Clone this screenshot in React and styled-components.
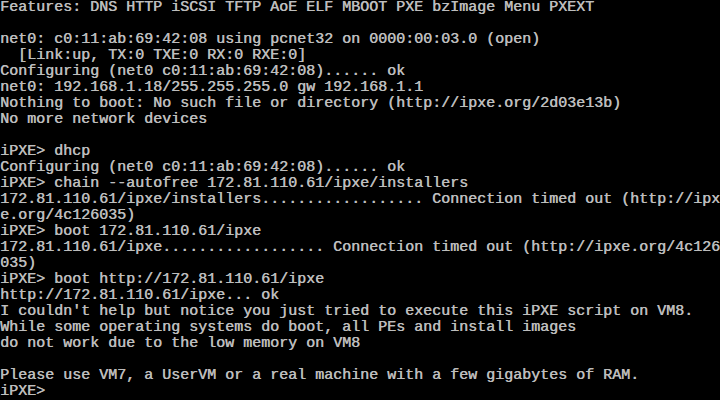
import React from "react";
import styled, { createGlobalStyle } from "styled-components";

const GlobalStyle = createGlobalStyle`
  html, body {
    margin: 0;
    padding: 0;
    background: #000;
  }
`;

const lines = [
  "Features: DNS HTTP iSCSI TFTP AoE ELF MBOOT PXE bzImage Menu PXEXT",
  "",
  "net0: c0:11:ab:69:42:08 using pcnet32 on 0000:00:03.0 (open)",
  "  [Link:up, TX:0 TXE:0 RX:0 RXE:0]",
  "Configuring (net0 c0:11:ab:69:42:08)...... ok",
  "net0: 192.168.1.18/255.255.255.0 gw 192.168.1.1",
  "Nothing to boot: No such file or directory (http://ipxe.org/2d03e13b)",
  "No more network devices",
  "",
  "iPXE> dhcp",
  "Configuring (net0 c0:11:ab:69:42:08)...... ok",
  "iPXE> chain --autofree 172.81.110.61/ipxe/installers",
  "172.81.110.61/ipxe/installers.................. Connection timed out (http://ipx",
  "e.org/4c126035)",
  "iPXE> boot 172.81.110.61/ipxe",
  "172.81.110.61/ipxe.................. Connection timed out (http://ipxe.org/4c126",
  "035)",
  "iPXE> boot http://172.81.110.61/ipxe",
  "http://172.81.110.61/ipxe... ok",
  "I couldn't help but notice you just tried to execute this iPXE script on VM8.",
  "While some operating systems do boot, all PEs and install images",
  "do not work due to the low memory on VM8",
  "",
  "Please use VM7, a UserVM or a real machine with a few gigabytes of RAM.",
  "iPXE>",
];

const Screen = styled.div`
  width: 720px;
  height: 400px;
  background: #000;
  overflow: hidden;
  display: flex;
  flex-direction: column;
`;

// one 80-column console row, 9x16 cells
const Line = styled.div`
  height: 16px;
  font-family: "Liberation Mono", "DejaVu Sans Mono", monospace;
  font-size: 15px;
  line-height: 16px;
  color: #bdbdbd;
  white-space: pre;
  text-shadow: 0.5px 0 0 #bdbdbd;
`;

export default function App() {
  return (
    <>
      <GlobalStyle />
      <Screen>
        {lines.map((text, i) => (
          <Line key={i}>{text}</Line>
        ))}
      </Screen>
    </>
  );
}
